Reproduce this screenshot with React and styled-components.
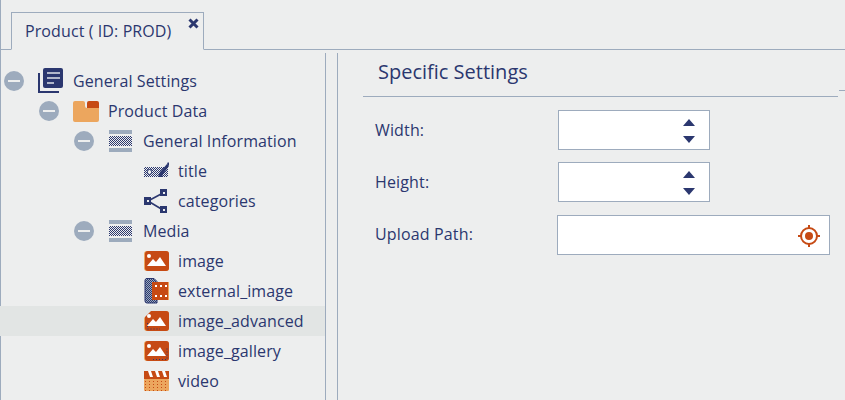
import React from "react";
import styled, { createGlobalStyle } from "styled-components";

const navy = "#2b376f";
const slate = "#9dabbd";
const rust = "#c64a14";
const sand = "#eca65e";

const GlobalStyle = createGlobalStyle`
  html, body {
    margin: 0;
    height: 100%;
    overflow: hidden;
    background: #edeeee;
  }
  body {
    font-family: "Open Sans", "Noto Sans", sans-serif;
    color: ${navy};
  }
`;

const Page = styled.div`
  width: 845px;
  height: 400px;
  display: flex;
  flex-direction: column;
  overflow: hidden;
`;

const TabBar = styled.div`
  height: 49px;
  flex: none;
  display: flex;
  align-items: flex-end;
  padding-left: 10px;
  border-left: 1px solid ${slate};
  border-bottom: 1px solid ${slate};
`;

const Tab = styled.div`
  position: relative;
  width: 193px;
  height: 38px;
  margin-bottom: -1px;
  box-sizing: border-box;
  padding: 6px 0 0 13px;
  font-size: 16px;
  letter-spacing: 0.1px;
  line-height: 24px;
  background: #edeeee;
  border: 1px solid ${slate};
  border-bottom: 1px solid #edeeee;
`;

const CloseIcon = styled.svg`
  position: absolute;
  top: 5px;
  right: 4px;
  width: 11px;
  height: 11px;
`;

const Body = styled.div`
  flex: 1;
  display: flex;
  min-height: 0;
  border-left: 1px solid ${slate};
`;

const TreePane = styled.div`
  width: 326px;
  flex: none;
  box-sizing: border-box;
  margin: 3px 0 0 -1px;
  padding-top: 13px;
  border-right: 1px solid ${slate};
`;

const Row = styled.div`
  height: 30px;
  display: flex;
  align-items: center;
  padding-left: ${(p) => 4 + p.$level * 35}px;
  font-size: 16px;
  letter-spacing: 0.1px;
  background: ${(p) => (p.$selected ? "#e2e5e4" : "transparent")};
`;

const Toggle = styled.span`
  width: 20px;
  height: 20px;
  flex: none;
  border-radius: 50%;
  background: ${slate};
  display: flex;
  align-items: center;
  justify-content: center;
  &::after {
    content: "";
    width: 12px;
    height: 2px;
    background: #edeeee;
  }
`;

const ToggleSlot = styled.span`
  width: 20px;
  flex: none;
`;

const IconSlot = styled.span`
  width: 26px;
  height: 26px;
  flex: none;
  margin: ${(p) => (p.$leaf ? "0 8px 0 15px" : "0 9px 0 14px")};
  display: flex;
  align-items: center;
  justify-content: center;
`;

const Label = styled.span`
  white-space: nowrap;
  line-height: 20px;
`;

const Splitter = styled.div`
  width: 11px;
  flex: none;
  margin-top: 3px;
  border-right: 1px solid ${slate};
`;

const SettingsPane = styled.div`
  flex: 1;
  min-width: 0;
  display: flex;
  flex-direction: column;
`;

const Heading = styled.div`
  position: relative;
  height: 46px;
  margin: 0 7px 0 25px;
  padding-left: 15px;
  font-size: 20px;
  line-height: 44px;
  border-bottom: 1px solid ${slate};
  &::after {
    content: "";
    position: absolute;
    top: 40px;
    right: -7px;
    width: 6px;
    height: 1px;
    background: ${slate};
  }
`;

const Form = styled.div`
  display: grid;
  grid-template-columns: 183px 152px;
  grid-auto-rows: 40px;
  row-gap: 12px;
  padding: 13px 0 0 37px;
`;

const FieldLabel = styled.div`
  font-size: 16px;
  letter-spacing: 0.15px;
  line-height: 40px;
`;

const Input = styled.div`
  box-sizing: border-box;
  background: #fff;
  border: 1px solid ${slate};
  position: relative;
  ${(p) =>
    p.$wide &&
    `
    width: 273px;
    height: 40px;
    margin-left: -1px;
    margin-top: 1px;
  `}
`;

const Spinner = styled.div`
  position: absolute;
  top: 8px;
  right: 14px;
  display: flex;
  flex-direction: column;
  gap: 10px;
`;

const Arrow = styled.span`
  width: 0;
  height: 0;
  border-left: 6px solid transparent;
  border-right: 6px solid transparent;
  ${(p) =>
    p.$down
      ? `border-top: 7px solid ${navy};`
      : `border-bottom: 7px solid ${navy};`}
`;

const TargetIcon = styled.svg`
  position: absolute;
  top: 9px;
  right: 9px;
  width: 22px;
  height: 22px;
`;

function Dither({ id, color = navy, bg = "#edeeee" }) {
  return (
    <defs>
      <pattern id={id} width="2" height="2" patternUnits="userSpaceOnUse">
        <rect width="2" height="2" fill={bg} />
        <rect width="1" height="1" fill={color} />
        <rect x="1" y="1" width="1" height="1" fill={color} />
      </pattern>
    </defs>
  );
}

function BookIcon() {
  return (
    <svg width="26" height="26" viewBox="0 0 26 26">
      <path d="M1 5v19h20" fill="none" stroke={navy} strokeWidth="2" />
      <rect x="5" y="0" width="20" height="20" rx="2" fill={navy} />
      <path d="M9 5h13M9 10h13M9 15h7" stroke="#dfe3ea" strokeWidth="1.6" />
    </svg>
  );
}

function FolderIcon() {
  return (
    <svg width="26" height="26" viewBox="0 0 26 26">
      <path d="M14 5a2 2 0 0 1 2-2h8a2 2 0 0 1 2 2v5H14z" fill={rust} />
      <path d="M0 5a2 2 0 0 1 2-2h8a2 2 0 0 1 2 2v3a2 2 0 0 0 2 2h12v12a2 2 0 0 1-2 2H2a2 2 0 0 1-2-2z" fill={sand} />
    </svg>
  );
}

function BlockIcon({ id }) {
  return (
    <svg width="24" height="24" viewBox="0 0 24 24">
      <Dither id={id} />
      <rect y="1" width="23" height="4" fill={slate} />
      <rect y="7" width="23" height="10" fill={`url(#${id})`} />
      <rect y="19" width="23" height="4" fill={slate} />
    </svg>
  );
}

function TitleIcon() {
  return (
    <svg width="26" height="26" viewBox="0 0 26 26">
      <Dither id="title-dither" />
      <rect y="9" width="24" height="10" fill="url(#title-dither)" />
      <rect x="3.5" y="11.5" width="4" height="5" rx="2" fill="#edeeee" stroke={navy} />
      <path d="M14 19l2-5 7-8 2 2-6 8-1 3z" fill={navy} />
      <path d="M23 6l1-2 1 1 0 2-1 1z" fill={navy} />
    </svg>
  );
}

function ShareIcon() {
  return (
    <svg width="26" height="26" viewBox="0 0 26 26">
      <path d="M4 13L19 5M4 13l15 9" stroke={navy} strokeWidth="1.6" />
      <g fill={navy}>
        <rect x="0" y="9" width="7" height="8" />
        <rect x="16" y="1" width="7" height="7" />
        <rect x="16" y="18" width="7" height="7" />
      </g>
      <g fill="#edeeee">
        <rect x="3" y="12" width="2" height="2" />
        <rect x="19" y="4" width="2" height="2" />
        <rect x="19" y="21" width="2" height="2" />
      </g>
    </svg>
  );
}

function Mountains() {
  return (
    <g fill="#fff">
      <circle cx="5" cy="8" r="2" />
      <path d="M3 18l6-7 3 3 4-5 6 9z" />
    </g>
  );
}

function ImageIcon({ variant, bg = "#edeeee" }) {
  return (
    <svg width="26" height="26" viewBox="0 0 26 26">
      <rect x="0" y="3" width="25" height="20" rx="3" fill={sand} />
      <rect x="1" y="3" width="24" height="20" rx="3" fill={rust} />
      {variant === "advanced" && (
        <path d="M0 3h7l-7 7z" fill={bg} />
      )}
      <Mountains />
      {variant === "advanced" && (
        <path d="M3.5 15v6H16" fill="none" stroke={navy} strokeWidth="1" strokeDasharray="1 2" />
      )}
      {variant === "gallery" && (
        <path d="M9 21.5h14V10" fill="none" stroke={navy} strokeWidth="1" strokeDasharray="1 2" />
      )}
    </svg>
  );
}

function FilmIcon() {
  return (
    <svg width="26" height="26" viewBox="0 0 26 26">
      <Dither id="film-dither" bg="#9dabbd" />
      <path d="M2 0.5h8l3 3V25H3a2 2 0 0 1-2-2V2z" fill="url(#film-dither)" stroke={navy} strokeWidth="1" />
      <rect x="8" y="4" width="17" height="18" fill={rust} />
      <rect x="24" y="4" width="1" height="18" fill={sand} />
      <g fill="#fff">
        <rect x="11" y="7" width="2" height="2" />
        <rect x="16" y="7" width="2" height="2" />
        <rect x="21" y="7" width="2" height="2" />
        <rect x="11" y="17" width="2" height="2" />
        <rect x="16" y="17" width="2" height="2" />
        <rect x="21" y="17" width="2" height="2" />
      </g>
    </svg>
  );
}

function VideoIcon() {
  return (
    <svg width="26" height="26" viewBox="0 0 26 26">
      <defs>
        <pattern id="video-dots" width="4" height="3" patternUnits="userSpaceOnUse">
          <rect width="4" height="3" fill={sand} />
          <rect x="1" y="1" width="1" height="1" fill={rust} />
        </pattern>
      </defs>
      <rect y="3" width="25" height="8" fill={rust} />
      <path d="M4 3h3l2 6H6zM11 3h3l2 6h-3zM18 3h3l2 6h-3z" fill="#fff" />
      <rect y="11" width="25" height="12" rx="1" fill="url(#video-dots)" />
    </svg>
  );
}

const icons = {
  book: <BookIcon />,
  folder: <FolderIcon />,
  blockA: <BlockIcon id="block-a" />,
  blockB: <BlockIcon id="block-b" />,
  title: <TitleIcon />,
  share: <ShareIcon />,
  image: <ImageIcon />,
  film: <FilmIcon />,
  advanced: <ImageIcon variant="advanced" bg="#e2e5e4" />,
  gallery: <ImageIcon variant="gallery" />,
  video: <VideoIcon />,
};

const treeRows = [
  { level: 0, icon: "book", label: "General Settings" },
  { level: 1, icon: "folder", label: "Product Data" },
  { level: 2, icon: "blockA", label: "General Information" },
  { level: 3, icon: "title", label: "title", leaf: true },
  { level: 3, icon: "share", label: "categories", leaf: true },
  { level: 2, icon: "blockB", label: "Media" },
  { level: 3, icon: "image", label: "image", leaf: true },
  { level: 3, icon: "film", label: "external_image", leaf: true },
  { level: 3, icon: "advanced", label: "image_advanced", leaf: true, selected: true },
  { level: 3, icon: "gallery", label: "image_gallery", leaf: true },
  { level: 3, icon: "video", label: "video", leaf: true },
];

function NumberField() {
  return (
    <Input>
      <Spinner>
        <Arrow />
        <Arrow $down />
      </Spinner>
    </Input>
  );
}

export default function App() {
  return (
    <Page>
      <GlobalStyle />
      <TabBar>
        <Tab>
          Product ( ID: PROD)
          <CloseIcon viewBox="0 0 11 11">
            <path d="M1.5 1.5l8 8M9.5 1.5l-8 8" stroke={navy} strokeWidth="3" />
          </CloseIcon>
        </Tab>
      </TabBar>
      <Body>
        <TreePane>
          {treeRows.map((row) => (
            <Row key={row.label} $level={row.level} $selected={row.selected}>
              {row.leaf ? <ToggleSlot /> : <Toggle />}
              <IconSlot $leaf={row.leaf}>{icons[row.icon]}</IconSlot>
              <Label>{row.label}</Label>
            </Row>
          ))}
        </TreePane>
        <Splitter />
        <SettingsPane>
          <Heading>Specific Settings</Heading>
          <Form>
            <FieldLabel>Width:</FieldLabel>
            <NumberField />
            <FieldLabel>Height:</FieldLabel>
            <NumberField />
            <FieldLabel>Upload Path:</FieldLabel>
            <Input $wide>
              <TargetIcon viewBox="0 0 22 22">
                <circle cx="11" cy="11" r="8" fill="none" stroke={rust} strokeWidth="2" />
                <circle cx="11" cy="11" r="4" fill={rust} />
                <path d="M11 0v4M11 18v4M0 11h4M18 11h4" stroke={rust} strokeWidth="2" />
              </TargetIcon>
            </Input>
          </Form>
        </SettingsPane>
      </Body>
    </Page>
  );
}
